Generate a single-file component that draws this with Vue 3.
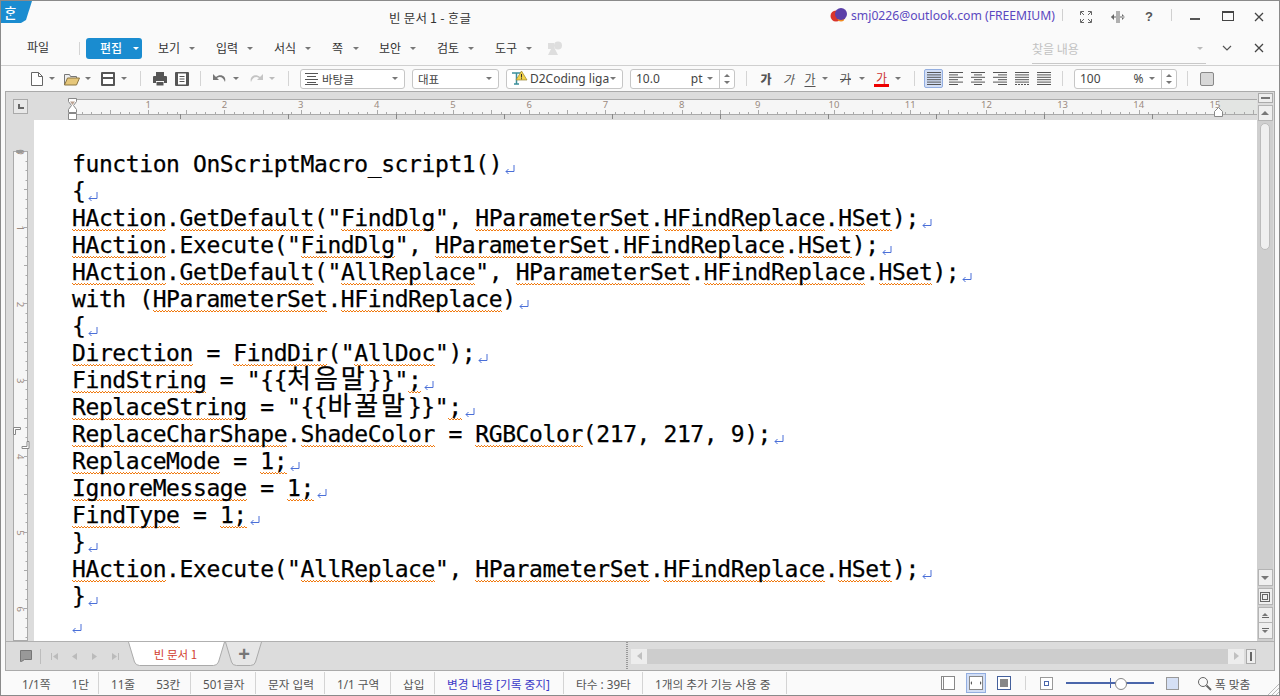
<script setup>
const src = [
  'function OnScriptMacro_script1()',
  '{',
  '[HAction].[GetDefault]("[FindDlg]", [HParameterSet].[HFindReplace].[HSet]);',
  '[HAction].Execute("[FindDlg]", [HParameterSet].[HFindReplace].[HSet]);',
  '[HAction].[GetDefault]("[AllReplace]", [HParameterSet].[HFindReplace].[HSet]);',
  'with ([HParameterSet].[HFindReplace])',
  '{',
  '[Direction] = [FindDir]("[AllDoc]");',
  '[FindString] = "{{[처음말]}}"[;]',
  '[ReplaceString] = "{{[바꿀말]}}"[;]',
  '[ReplaceCharShape].[ShadeColor] = [RGBColor](217, 217, 9);',
  '[ReplaceMode] = [1;]',
  '[IgnoreMessage] = [1;]',
  '[FindType] = [1;]',
  '}',
  '[HAction].Execute("[AllReplace]", [HParameterSet].[HFindReplace].[HSet]);',
  '}',
  ''
]
const lines = src.map(l => l.split(/(\[[^\]]*\])/).filter(Boolean).map(s => {
  const sp = s[0] === '['
  const t = sp ? s.slice(1, -1) : s
  return { sp, kr: /[가-힣]/.test(t), t }
}))

const menus = [
  { t: '보기' }, { t: '입력' }, { t: '서식' }, { t: '쪽' }, { t: '보안' }, { t: '검토' }, { t: '도구' }
]

const full = [0, 14], left = [0, 9], right = [5, 14], mid = [3, 11]
const aligns = [
  { on: true, rows: [full, full, full, full, full, full] },
  { rows: [full, left, full, left, full, left] },
  { rows: [full, mid, full, mid, full, mid] },
  { rows: [full, right, full, right, full, right] },
  { rows: [full, full, full, full, full, full], dash: true },
  { rows: [full, full, full, full, full, full], sparse: true }
]

const hTicks = Array.from({ length: 125 }, (_, i) => ({ x: 38.5 + Math.round(i * 9.525), big: i % 4 === 0 }))
const hNums = Array.from({ length: 15 }, (_, i) => ({ n: i + 1, x: 38 + (i + 1) * 76.2 }))
const hTabs = Array.from({ length: 11 }, (_, i) => 38.5 + (i + 1) * 108)
const vTicks = Array.from({ length: 52 }, (_, i) => ({ y: 0.5 + Math.round(i * 9.525), big: i % 4 === 0 }))
const vNums = Array.from({ length: 7 }, (_, i) => ({ n: i, y: i * 76.2 + 1 }))

const stats = [
  { w: 98, items: ['1/1쪽', '1단'], first: true },
  { w: 92, items: ['11줄', '53칸'] },
  { w: 65, items: ['501글자'] },
  { w: 69, items: ['문자 입력'] },
  { w: 66, items: ['1/1 구역'] },
  { w: 44, items: ['삽입'] },
  { w: 129, items: ['변경 내용 [기록 중지]'], blue: true },
  { w: 79, items: ['타수 : 39타'] },
  { w: 144, items: ['1개의 추가 기능 사용 중'] }
]
</script>

<template>
  <div class="win">
    <header class="title">
      <div class="logo">&#x1112;&#x119E;&#x11AB;</div>
      <div class="doc-title">빈 문서 1 - &#x1112;&#x119E;&#x11AB;글</div>
      <svg class="acct" width="18" height="14" viewBox="0 0 18 14">
        <circle cx="6" cy="8" r="5.5" fill="#d9342b" />
        <circle cx="11" cy="10" r="3.5" fill="#f08a1e" />
        <circle cx="11" cy="6" r="6" fill="#5b3fa8" />
      </svg>
      <div class="email">smj0226@outlook.com (FREEMIUM)</div>
      <i class="vsep v1"></i>
      <svg class="full" width="12" height="12" viewBox="0 0 12 12" fill="none" stroke="#666"><path d="M.5 4V.5H4M8 .5h3.5V4M11.5 8v3.5H8M4 11.5H.5V8M1 1l3 3M11 1L8 4M11 11L8 8M1 11l3-3" /></svg>
      <svg class="split" width="14" height="12" viewBox="0 0 14 12" fill="#666"><path d="M5.500 0h1v12h-1zM7.500 0h1v12h-1zM0 5.500h5v1H0zM9 5.500h5v1H9zM3 3v6L0 6zM11 3v6l3-3z" /></svg>
      <div class="help">?</div>
      <i class="vsep v2"></i>
      <svg class="wmin" width="10" height="3"><rect width="10" height="2" y="0" fill="#555" /></svg>
      <svg class="wmax" width="12" height="11" fill="none" stroke="#444"><rect x=".5" y=".5" width="11" height="9" /><path d="M0 1.500h12" /></svg>
      <svg class="wclose" width="10" height="10" stroke="#444" stroke-width="1.3"><path d="M1 1l8 8M9 1l-8 8" /></svg>
    </header>

    <nav class="menu">
      <div class="file">파일</div>
      <i class="msep"></i>
      <div class="edit"><span>편집</span><i class="caret white"></i></div>
      <div class="mitems">
        <div v-for="m in menus" :key="m.t" class="mi"><span>{{ m.t }}</span><i class="caret"></i></div>
      </div>
      <svg class="faded" width="15" height="14" viewBox="0 0 15 14" fill="#dedede"><circle cx="10" cy="4.500" r="4" /><path d="M5 4l5 10H0zM0 2h6v6H0z" /></svg>
      <div class="find"><span>찾을 내용</span><i class="caret light"></i></div>
      <svg class="chev" width="10" height="6" fill="none" stroke="#555" stroke-width="1.2"><path d="M1 1l4 4 4-4" /></svg>
      <svg class="wclose2" width="10" height="10" stroke="#444" stroke-width="1.3"><path d="M1 1l8 8M9 1l-8 8" /></svg>
    </nav>

    <div class="toolbar">
      <div class="tool ml29">
        <svg width="14" height="16" viewBox="0 0 14 16" fill="#fff" stroke="#666"><path d="M1.500 1.500h7l4 4v9h-11z" /><path d="M8.500 1.500v4h4" fill="none" /></svg><i class="caret"></i>
      </div>
      <div class="tool ml9">
        <svg width="16" height="14" viewBox="0 0 16 14"><path d="M.5 13V2.500h5l1 2h6V6" fill="#eee" stroke="#777" /><path d="M.5 13l3-7h12l-3 7z" fill="#e6c77a" stroke="#8a7440" /></svg><i class="caret"></i>
      </div>
      <div class="tool ml10">
        <svg width="14" height="14" viewBox="0 0 14 14"><rect width="14" height="14" rx="1" fill="#555" /><rect x="2" y="2" width="10" height="3" fill="#fff" /><rect x="2" y="7" width="10" height="5" fill="#fff" /></svg><i class="caret gap6"></i>
      </div>
      <i class="tsep ml13"></i>
      <svg class="ml12" width="14" height="14" viewBox="0 0 14 14" fill="#555"><rect x="3" y="0" width="8" height="4" /><path d="M1 4h12a1 1 0 011 1v6h-3v-2H3v2H0V5a1 1 0 011-1z" /><rect x="3.500" y="10" width="7" height="3.500" fill="#555" /></svg>
      <svg class="ml8" width="14" height="14" viewBox="0 0 14 14"><rect width="14" height="14" rx="1" fill="#555" /><path d="M3 1.500h8v11H3z" fill="#fff" /><path d="M4.500 4.500h5M4.500 7h5M4.500 9.500h5" stroke="#555" /></svg>
      <i class="tsep ml11"></i>
      <div class="tool ml12 gap6">
        <svg width="14" height="11" viewBox="0 0 14 11" fill="#777"><path d="M0 1v6h6L4 5c3-2 6-1 8 4 2-6-5-9-9-5z" /></svg><i class="caret"></i>
      </div>
      <div class="tool ml10 gap6">
        <svg width="14" height="11" viewBox="0 0 14 11" fill="#c4c4c4"><path d="M14 1v6H8l2-2C7 3 4 4 2 9 0 3 7 0 11 4z" /></svg><i class="caret light"></i>
      </div>
      <i class="tsep ml13"></i>

      <div class="sel w105 ml11">
        <svg class="lines" width="13" height="13" stroke="#555"><path d="M0 1.500h13M2 4.500h9M0 7.500h13M2 10.500h9M0 12.500h13" /></svg>
        <span class="sel-t">바탕글</span><i class="caret"></i>
      </div>
      <div class="sel w87 ml7"><span class="sel-t pl5">대표</span><i class="caret"></i></div>
      <div class="sel w117 ml7">
        <svg class="ft" width="17" height="17" viewBox="0 0 17 17"><path d="M1 3h9M5.500 3v11M3 14h5" stroke="#3a8f9a" stroke-width="1.5" fill="none" /><path d="M10.500 1l5.500 9H5z" fill="#f3d34a" stroke="#9a8430" stroke-width=".7" /><path d="M10.500 4v3.500M10.500 8.300v1" stroke="#333" /></svg>
        <span class="sel-t clip">D2Coding liga</span><i class="caret"></i>
      </div>
      <div class="sel w105 ml7 spin-sel">
        <span class="num">10.0</span><span class="unit pt">pt</span><i class="caret"></i>
        <div class="spin"><i class="up"></i><i class="dn"></i></div>
      </div>
      <i class="tsep ml11"></i>
      <span class="ga b w12 ml13">가</span>
      <span class="ga it w13 ml10">가</span>
      <span class="ga un w14 ml8">가</span><i class="caret ml5"></i>
      <span class="ga strike w13 ml11">가</span><i class="caret ml7"></i>
      <span class="ga red ml9">가</span><i class="caret ml6"></i>
      <i class="tsep ml13"></i>
      <div class="aligns">
        <div v-for="(a, i) in aligns" :key="i" class="al" :class="{ on: a.on }">
          <svg width="14" height="13" stroke="#555">
            <path v-for="(r, j) in a.rows" :key="j" :d="`M${r[0]} ${j * 2.4 + .5}H${r[1]}`" :stroke-dasharray="a.dash && j === 5 ? '2 1' : null" />
          </svg>
        </div>
      </div>
      <i class="tsep ml7"></i>
      <div class="sel w103 ml11 spin-sel">
        <span class="num">100</span><span class="unit pc">%</span><i class="caret"></i>
        <div class="spin"><i class="up"></i><i class="dn"></i></div>
      </div>
      <i class="tsep ml10"></i>
      <div class="sq ml12"></div>
    </div>

    <main class="frame">
      <div class="rulerband">
        <div class="corner"><i></i></div>
        <svg class="hruler" width="1223" height="28">
          <rect x="38" y="7" width="1146" height="15" fill="#f6f6f6" />
          <rect x="1184" y="7" width="39" height="15" fill="#e3e5e3" />
          <path d="M38 7.500H1223M38 22.500H1223" stroke="#aaa" />
          <path v-for="t in hTicks" :key="t.x" :d="`M${t.x} ${t.big ? 18 : 20}V22`" stroke="#aaa" />
          <path v-for="x in hTabs" :key="x" :d="`M${x} 22V27`" stroke="#888" />
          <text v-for="n in hNums" :key="n.n" :x="n.x" y="16" class="rnum" text-anchor="middle">{{ n.n }}</text>
          <path d="M34.500 6.500h8v3l-3 4 3 4v3h-8v-3l3-4-3-4z" fill="#fff" stroke="#888" />
          <path d="M34.500 21.500h8v6h-8z" fill="#fff" stroke="#888" />
          <path d="M36 9.500l2.500 3.500 2.500-3.500" fill="#b9a090" />
          <path d="M1180.500 24.500v-5l4-4 4 4v5z" fill="#fff" stroke="#888" />
        </svg>
        <div class="minbtn"><i></i></div>
      </div>

      <div class="mid">
        <aside class="strip">
          <svg class="vruler" width="15" height="490">
            <rect x=".5" y=".5" width="14" height="489" fill="#f6f6f6" stroke="#aaa" />
            <path v-for="t in vTicks" :key="t.y" :d="`M${t.big ? 11 : 12.500} ${t.y}H15`" stroke="#aaa" />
            <g v-for="n in vNums" :key="n.n" :transform="`translate(4 ${n.y}) rotate(90)`">
              <text class="rnum" text-anchor="middle">{{ n.n }}</text>
            </g>
            <rect x="3" y="-1" width="7" height="3" rx="1" fill="#999" />
            <path d="M.5 276.500h7v2h-5v5h-2z" fill="#fff" stroke="#888" />
            <path d="M15.500 297.500h-7v-2h5v-5h2z" transform="translate(.5 0)" fill="#fff" stroke="#888" />
          </svg>
        </aside>

        <section class="page">
          <div v-for="(l, i) in lines" :key="i" class="line"><span
            v-for="(s, j) in l" :key="j" :class="{ sp: s.sp, kr: s.kr }">{{ s.t }}</span><svg class="ret" width="10" height="10" viewBox="0 0 10 10" fill="none" stroke="#4a6fd8"><path d="M9 0v6.500H1M3.500 4L1 6.500 3.500 9" /></svg></div>
        </section>

        <aside class="vscroll">
          <div class="sb top"><i class="tri-up"></i></div>
          <div class="thumb"></div>
          <div class="sb dn1"><i class="tri-dn"></i></div>
          <div class="sb sq1"><i></i></div>
          <div class="sb two"><i class="tri-up"></i><i class="bar"></i></div>
          <div class="sb two dn2"><i class="bar"></i><i class="tri-dn"></i></div>
        </aside>
      </div>

      <div class="tabs">
        <div class="tabs-left">
          <svg class="note" width="12" height="12"><path d="M.5.500h11v9h-7l-3 2h-1z" fill="#999" stroke="#777" /></svg>
          <i class="tabsep"></i>
          <svg class="nav" width="70" height="9" fill="#bbb">
            <path d="M0 1h1v7H0zM7 1v7L2 4.500z" />
            <path d="M26 1v7l-5-3.500z" />
            <path d="M41 1v7l5-3.500z" />
            <path d="M61 1v7l5-3.500zM67 1h1v7h-1z" />
          </svg>
          <div class="tab">
            <svg class="tab-bg" width="98" height="25"><path d="M.5 0l6 20q1.500 3.500 5 3.500h74q3.500 0 5-3.500l6-20" fill="#fff" stroke="#aaa" /></svg>
            <span>빈 문서 1</span>
          </div>
          <div class="addtab">
            <svg class="tab-bg" width="38" height="25"><path d="M.5 0l6 20q1 3.500 5 3.500h14q4 0 5-3.500l6-20" fill="#e6e6e6" stroke="#aaa" /></svg>
            <span>+</span>
          </div>
        </div>
        <i class="splitter"></i>
        <div class="hs">
          <div class="hbtn"><i class="tri-l"></i></div>
          <div class="htrack"></div>
          <div class="hbtn"><i class="tri-r"></i></div>
        </div>
        <div class="hend"><i></i></div>
      </div>
    </main>

    <footer class="status">
      <div v-for="(s, i) in stats" :key="i" class="st" :class="{ first: s.first, blue: s.blue }" :style="{ width: s.w + 'px' }">
        <span v-for="t in s.items" :key="t">{{ t }}</span>
      </div>
      <div class="view">
        <svg width="14" height="14" fill="#fff" stroke="#888"><rect x=".5" y=".5" width="13" height="13" /><path d="M2.500.500v13" /></svg>
        <div class="vactive"><svg width="14" height="14" stroke="#888" fill="#fff"><rect x=".5" y=".5" width="13" height="13" /><path d="M3 5v4L1.500 7zM11 5v4l1.500-2z" fill="#555" stroke="none" /></svg></div>
        <svg width="14" height="14"><rect x=".5" y=".5" width="13" height="13" fill="#fff" stroke="#44609c" /><rect x="3" y="3" width="8" height="8" fill="#888" /></svg>
        <i class="stsep"></i>
        <svg class="z1" width="13" height="13"><rect x=".5" y=".5" width="12" height="12" fill="#fff" stroke="#999" /><rect x="4.500" y="4.500" width="4" height="4" fill="#fff" stroke="#4a66aa" /></svg>
        <div class="slider"><i class="tick"></i><i class="knob"></i></div>
        <svg class="z2" width="13" height="13"><rect x=".5" y=".5" width="12" height="12" fill="#d5e0f5" stroke="#999" /></svg>
        <svg class="mag" width="15" height="15" fill="none" stroke="#666"><circle cx="6" cy="6" r="4.500" /><path d="M9.500 9.500l4.500 4.500" stroke-width="2" /></svg>
        <span class="fit">폭 맞춤</span>
      </div>
    </footer>
    <svg class="grip" width="11" height="11" stroke="#bbb"><path d="M11 0L0 11M11 4l-7 7M11 8l-3 3" /></svg>
  </div>
</template>

<style>
html, body { margin: 0; background: #fafafa; overflow: hidden; }
</style>

<style scoped>
.win {
  position: relative;
  box-sizing: border-box;
  width: 1280px;
  height: 696px;
  border: 1px solid #8a8a8a;
  background: #fafafa;
  display: flex;
  flex-direction: column;
  overflow: hidden;
  font-family: "Noto Sans", "Noto Sans CJK KR", sans-serif;
  font-size: 12px;
  color: #444;
}
i { display: block; font-style: normal; }
svg { display: block; flex: none; }

/* title */
.title { height: 30px; flex: none; display: flex; align-items: center; }
.logo {
  align-self: flex-start;
  width: 31px; height: 22px;
  background: #1a8cd0;
  clip-path: polygon(0 0, 100% 0, 25px 19px, 20px 22px, 0 22px);
  color: #fff;
  font: 500 14px/22px "Noto Sans CJK KR", sans-serif;
  padding-left: 3px;
  box-sizing: border-box;
}
.doc-title { margin-left: 357px; width: 441px; font: 12.5px "Noto Sans CJK KR", sans-serif; letter-spacing: .2px; color: #333; position: relative; top: 1px; white-space: pre; }
.acct { margin-top: -2px; }
.email { margin-left: 3px; width: 207px; color: #5a48c0; font-size: 12.2px; white-space: nowrap; margin-top: -1px; }
.vsep { width: 1px; height: 12px; background: #d0d0d0; margin-top: -2px; }
.v1 { margin-left: 4px; }
.full { margin-left: 17px; margin-top: 1px; }
.split { margin-left: 19px; margin-top: 1px; }
.help { margin-left: 20px; width: 9px; font: bold 13px "Liberation Sans", sans-serif; color: #555; }
.v2 { margin-left: 17px; }
.wmin { margin-left: 18px; margin-top: 7px; }
.wmax { margin-left: 22px; margin-top: 1px; }
.wclose { margin-left: 20px; margin-top: 1px; }

/* menu */
.menu { height: 34px; flex: none; display: flex; align-items: center; border-bottom: 1px solid #cfcfcf; box-sizing: content-box; }
.menu { font-family: "Noto Sans CJK KR", sans-serif; font-size: 12px; color: #333; line-height: 16px; }
.file { margin-left: 26px; width: 24px; position: relative; top: -1px; }
.msep { width: 1px; height: 13px; background: #d4d4d4; margin-left: 28px; }
.edit {
  margin-left: 6px; width: 56px; height: 21px;
  background: #1a8cd0; border-radius: 3px; color: #fff; font-weight: 500;
  display: flex; align-items: center; padding-left: 14px; box-sizing: border-box; gap: 11px;
}
.mitems { margin-left: 16px; display: flex; }
.mi { width: 58px; display: flex; align-items: center; }
.mi .caret { margin-left: auto; margin-right: 21px; }
.mi:nth-child(4) { width: 47px; }
.mi:nth-child(4) .caret { margin-right: 20px; }
.faded { margin-left: -5px; }
.find {
  margin-left: 469px; width: 174px; height: 29px; margin-top: 2px;
  border-bottom: 1px solid #c8c8c8; box-sizing: border-box;
  display: flex; align-items: center; justify-content: space-between; color: #c2c2c2; padding-right: 3px;
}
.chev { margin-left: 16px; }
.wclose2 { margin-left: 22px; }

.caret { width: 0; height: 0; border-left: 3px solid transparent; border-right: 3px solid transparent; border-top: 3px solid #777; flex: none; }
.caret.white { border-top-color: #fff; }
.caret.light { border-top-color: #bbb; }

/* toolbar */
.toolbar { height: 25px; flex: none; display: flex; align-items: center; font-family: "Noto Sans", "Noto Sans CJK KR", sans-serif; color: #444; }
.tool { display: flex; align-items: center; gap: 5px; }
.gap6 { gap: 6px; }
.caret.gap6 { margin-left: 1px; }
.ml5 { margin-left: 5px; }
.ml6 { margin-left: 6px; } .ml7 { margin-left: 7px; } .ml8 { margin-left: 8px; } .ml9 { margin-left: 9px; }
.ml10 { margin-left: 10px; } .ml11 { margin-left: 11px; } .ml12 { margin-left: 12px; } .ml13 { margin-left: 13px; }
.ml29 { margin-left: 29px; }
.tsep { width: 1px; height: 15px; background: #d4d4d4; flex: none; }
.sel {
  height: 20px; box-sizing: border-box; flex: none;
  border: 1px solid #c6c6c6; border-radius: 3px; background: #fff;
  display: flex; align-items: center; position: relative;
  padding-right: 6px; font-size: 11.5px; color: #444;
}
.sel > .caret { margin-left: auto; }
.w105 { width: 105px; } .w87 { width: 87px; } .w117 { width: 117px; } .w103 { width: 103px; }
.lines { margin-left: 4px; }
.sel-t { margin-left: 4px; white-space: nowrap; }
.pl5 { margin-left: 5px; }
.ft { margin-left: 4px; }
.clip { margin-left: 2px; font-size: 12px; }
.num { margin-left: 5px; font-size: 12px; }
.unit { font-size: 12px; }
.pt { margin-left: 31px; }
.pc { margin-left: 33px; }
.spin-sel { padding-right: 0; }
.spin-sel > .caret { margin-left: auto; margin-right: 6px; }
.spin { width: 14px; height: 18px; border-left: 1px solid #c6c6c6; display: flex; flex-direction: column; align-items: center; justify-content: center; gap: 4px; flex: none; }
.spin .up { width: 0; height: 0; border: 3px solid transparent; border-top: 0; border-bottom: 3px solid #777; }
.spin .dn { width: 0; height: 0; border: 3px solid transparent; border-bottom: 0; border-top: 3px solid #777; }
.ga { font: 12px/15px "Noto Sans CJK KR", sans-serif; color: #555; flex: none; text-align: center; }
.w12 { width: 12px; } .w13 { width: 13px; } .w14 { width: 14px; }
.b { font-weight: 900; }
.it { font-style: italic; }
.un { text-decoration: underline; text-underline-offset: 2px; }
.strike { text-decoration: line-through; }
.red { color: #c33; width: 15px; box-sizing: content-box; border-bottom: 3px solid #e00; line-height: 13px; height: 13px; }
.aligns { margin-left: 9px; display: flex; gap: 0; }
.al { width: 22px; height: 19px; display: flex; align-items: center; justify-content: center; box-sizing: border-box; flex: none; margin-left: 0; }
.al.on { width: 19px; margin-right: 2px; background: #d2def5; border: 1px solid #93aee0; border-radius: 2px; }
.sq { width: 14px; height: 14px; box-sizing: border-box; background: #d8d8d8; border: 1px solid #888; border-radius: 2px; }

/* frame */
.frame {
  flex: 1; min-height: 0;
  margin: 0 4px;
  border: 1px solid #aaa; border-bottom: 0;
  display: flex; flex-direction: column;
  background: #dcdcdc;
}
.rulerband { height: 28px; flex: none; display: flex; background: #dcdcdc; }
.corner { width: 15px; height: 15px; box-sizing: border-box; margin: 7px 0 0 7px; border: 1px solid #aaa; background: #e8e8e8; position: relative; }
.corner i { position: absolute; left: 4px; top: 4px; width: 6px; height: 5px; border-left: 2px solid #666; border-bottom: 2px solid #666; box-sizing: border-box; }
.hruler { margin-left: 6px; }
.minbtn { width: 15px; height: 10px; margin: 1px 0 0 1px; box-sizing: border-box; border: 1px solid #aaa; background: #eee; display: flex; align-items: center; justify-content: center; }
.minbtn i { width: 9px; height: 2px; background: #777; }

.mid { flex: 1; min-height: 0; display: flex; }
.strip { width: 28px; flex: none; padding: 31px 0 0 7px; box-sizing: border-box; }
.vruler { overflow: visible; }
.rnum { font: 9.5px "Noto Sans", sans-serif; fill: #9a8a80; }

.page {
  width: 1223px; flex: none; background: #fff; box-sizing: border-box;
  padding: 31px 0 0 38px; overflow: hidden;
  font-family: "DejaVu Sans Mono", monospace;
  font-size: 23px; letter-spacing: -0.405px; color: #000;
  -webkit-text-stroke: 0.25px #000;
}
.line { height: 27px; line-height: 27px; white-space: pre; display: flex; align-items: baseline; }
.sp {
  background-image:
    linear-gradient(90deg, #f07a10 50%, transparent 50%),
    linear-gradient(90deg, transparent 50%, #f07a10 50%);
  background-size: 3px 1px, 3px 1px;
  background-position: 0 calc(100% - 2px), 0 calc(100% - 1px);
  background-repeat: repeat-x;
}
.kr { font-family: "Noto Sans CJK KR", sans-serif; font-size: 26px; letter-spacing: 2.9px; line-height: 0; }
.ret { margin-left: 3px; align-self: flex-start; margin-top: 14px; }
.ret:first-child { margin-left: 0; }

.vscroll { width: 16px; flex: none; background: #cfcfcf; display: flex; flex-direction: column; align-items: center; box-sizing: border-box; }
.sb { width: 15px; box-sizing: border-box; border: 1px solid #b4b4b4; background: #efefef; display: flex; align-items: center; justify-content: center; flex: none; }
.top { height: 16px; margin-top: -15px; }
.thumb { width: 10px; height: 127px; margin-top: 2px; background: #efefef; border: 1px solid #bbb; border-radius: 5px; box-sizing: border-box; flex: none; }
.dn1 { height: 17px; margin-top: auto; }
.sq1 { height: 17px; margin-top: 2px; }
.sq1 i { border: 1px solid #666; outline: 1px solid #666; outline-offset: 1px; box-sizing: border-box; width: 6px; height: 6px; }
.two { height: 16px; margin-top: 2px; flex-direction: column; gap: 1px; }
.dn2 { margin-top: 0; margin-bottom: 2px; border-top: 0; }
.bar { width: 7px; height: 1px; background: #666; }
.tri-up { width: 0; height: 0; border: 4px solid transparent; border-top: 0; border-bottom: 4px solid #777; }
.tri-dn { width: 0; height: 0; border: 4px solid transparent; border-bottom: 0; border-top: 4px solid #777; }
.two .tri-up, .two .tri-dn { border-width: 3.5px; }
.two .tri-up { border-top: 0; } .two .tri-dn { border-bottom: 0; }

.tabs { height: 28px; flex: none; display: flex; align-items: center; border-top: 1px solid #b0b0b0; border-bottom: 1px solid #aaa; background: #dcdcdc; }
.tabs-left { width: 620px; flex: none; height: 100%; display: flex; align-items: center; }
.note { margin-left: 14px; }
.tabsep { width: 1px; height: 15px; background: #bdbdbd; margin-left: 8px; }
.nav { margin-left: 10px; }
.tab, .addtab { position: relative; align-self: flex-start; height: 25px; flex: none; display: flex; justify-content: center; align-items: center; box-sizing: border-box; padding-bottom: 1px; }
.tab { width: 98px; margin-left: 7px; padding-right: 3px; color: #d2402e; font: 11.5px "Noto Sans CJK KR", sans-serif; }
.addtab { width: 38px; margin-left: -1px; color: #777; font: bold 20px/20px "Liberation Sans", sans-serif; }
.tab-bg { position: absolute; left: 0; top: 0; }
.tab span, .addtab span { position: relative; }
.splitter { width: 2px; height: 100%; background-image: linear-gradient(#999 50%, transparent 50%); background-size: 2px 2px; }
.hs { margin-left: 3px; width: 613px; height: 15px; background: #cdcdcd; display: flex; }
.hbtn { width: 16px; height: 15px; background: #ededed; display: flex; align-items: center; justify-content: center; flex: none; }
.htrack { flex: 1; }
.tri-l { width: 0; height: 0; border: 4px solid transparent; border-left: 0; border-right: 5px solid #c0c0c0; }
.tri-r { width: 0; height: 0; border: 4px solid transparent; border-right: 0; border-left: 5px solid #c0c0c0; }
.hend { width: 10px; height: 15px; margin-left: 2px; box-sizing: border-box; border: 1px solid #aaa; background: #eee; display: flex; justify-content: center; align-items: center; }
.hend i { width: 2px; height: 9px; background: #666; }

/* status */
.status { height: 24px; flex: none; display: flex; align-items: center; font: 11.7px "Noto Sans", "Noto Sans CJK KR", sans-serif; color: #555; position: relative; }
.st { height: 22px; box-sizing: border-box; border-right: 1px solid #d4d4d4; display: flex; align-items: center; gap: 21px; padding-left: 12px; white-space: nowrap; flex: none; }
.st.first { padding-left: 21px; }
.st.blue { color: #3a3ac8; }
.view { margin-left: 154px; display: flex; align-items: center; }
.vactive { margin-left: 11px; width: 20px; height: 20px; box-sizing: border-box; background: #d2def5; border: 1px solid #93aee0; display: flex; align-items: center; justify-content: center; }
.vactive + svg { margin-left: 11px; }
.stsep { width: 1px; height: 14px; background: #d4d4d4; margin-left: 14px; }
.z1 { margin-left: 14px; }
.slider { margin-left: 13px; width: 88px; height: 2px; background: #4a66aa; position: relative; }
.tick { position: absolute; left: 44px; top: -4px; width: 1px; height: 10px; background: #4a66aa; }
.knob { position: absolute; left: 49px; top: -4px; width: 10px; height: 10px; border-radius: 50%; background: #fff; border: 1px solid #888; }
.z2 { margin-left: 12px; }
.mag { margin-left: 18px; }
.fit { margin-left: 3px; white-space: nowrap; }
.grip { position: absolute; right: 0; bottom: 0; }
</style>
